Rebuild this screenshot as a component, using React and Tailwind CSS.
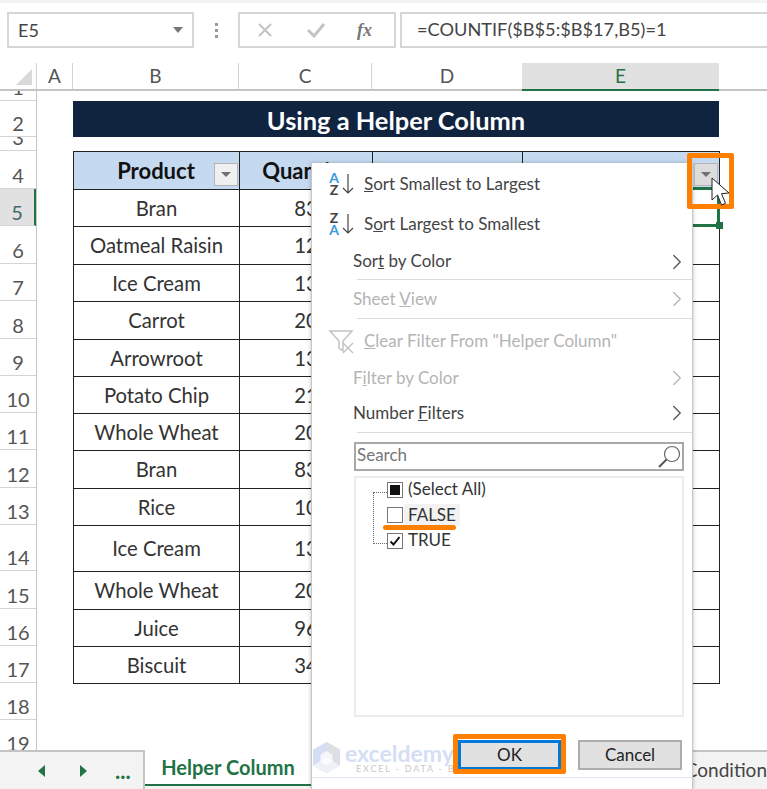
import React from 'react';
import { ChevronRight } from 'lucide-react';

const rows = [
  { n: 5, h: 'h-[37px]', product: 'Bran', qty: '83' },
  { n: 6, h: 'h-[38px]', product: 'Oatmeal Raisin', qty: '12' },
  { n: 7, h: 'h-[37px]', product: 'Ice Cream', qty: '13' },
  { n: 8, h: 'h-[38px]', product: 'Carrot', qty: '20' },
  { n: 9, h: 'h-[37px]', product: 'Arrowroot', qty: '13' },
  { n: 10, h: 'h-[37px]', product: 'Potato Chip', qty: '21' },
  { n: 11, h: 'h-[37px]', product: 'Whole Wheat', qty: '20' },
  { n: 12, h: 'h-[38px]', product: 'Bran', qty: '83' },
  { n: 13, h: 'h-[37px]', product: 'Rice', qty: '10' },
  { n: 14, h: 'h-[46px]', product: 'Ice Cream', qty: '13' },
  { n: 15, h: 'h-[38px]', product: 'Whole Wheat', qty: '20' },
  { n: 16, h: 'h-[37px]', product: 'Juice', qty: '96' },
  { n: 17, h: 'h-[37px]', product: 'Biscuit', qty: '34' },
];

const FilterButton = ({ className }) => (
  <div className={`flex items-center justify-center border border-[#b5b5b5] bg-[#f0f0f0] ${className}`}>
    <div className="h-0 w-0 border-x-[5px] border-t-[5px] border-x-transparent border-t-[#707070]" />
  </div>
);

const RowHead = ({ h, active, children }) => (
  <div className={`flex items-end justify-center overflow-hidden border-b border-[#d4d4d4] pb-[1px] text-[20px] leading-[24px] ${h} ${active ? 'border-r-2 border-r-[#217346] bg-[#e1e1e1] text-[#3f6b6b]' : 'text-[#555]'}`}>
    {children}
  </div>
);

const SortIcon = ({ flip }) => (
  <div className="flex w-[28px] shrink-0 items-center">
    <div className="flex w-[12px] flex-col items-center text-[14px] font-bold leading-[12px]">
      <span className={`h-[12px] ${flip ? 'text-[#444]' : 'text-[#3b9ad9]'}`}>{flip ? 'Z' : 'A'}</span>
      <span className={`h-[12px] ${flip ? 'text-[#3b9ad9]' : 'text-[#444]'}`}>{flip ? 'A' : 'Z'}</span>
    </div>
    <svg width="14" height="22" viewBox="0 0 14 22" className="ml-[1px]">
      <path d="M7 1v19M2 15l5 5 5-5" fill="none" stroke="#444" strokeWidth="1.2" />
    </svg>
  </div>
);

const MenuItem = ({ h, disabled, arrow, icon, children }) => (
  <div className={`flex items-center text-[17px] ${h} ${disabled ? 'text-[#b4b4b4]' : 'text-[#444]'} ${icon ? 'pl-[16px]' : 'pl-[41px]'}`}>
    {icon}
    <span className={icon ? 'ml-[8px]' : ''}>{children}</span>
    {arrow && <ChevronRight className={`absolute left-[352px] ${disabled ? 'text-[#b4b4b4]' : 'text-[#555]'}`} size={26} strokeWidth={1.2} />}
  </div>
);

const Sep = () => <div className="ml-[45px] h-px bg-[#dcdcdc]" />;

const TreeItem = ({ box, label, highlight }) => (
  <div className="flex h-[25.5px] items-center pl-[31px]">
    <div className="flex h-[16px] w-[16px] items-center justify-center border-[1.5px] border-[#777] bg-white">{box}</div>
    <span className={`ml-[1px] flex h-[22px] items-center px-[4px] pb-[2px] text-[17px] text-[#333] ${highlight ? 'bg-[#f2f2f2]' : ''}`}>{label}</span>
  </div>
);

const App = () => {
  return (
    <div className="relative flex h-[789px] w-[767px] flex-col overflow-hidden bg-white font-['Lato',sans-serif] text-[#333]">
      {/* formula bar */}
      <div className="flex h-[63px] items-start border-t-[3px] border-[#f3f3f3] bg-white pt-[9px]">
        <div className="ml-[7px] flex h-[36px] w-[187px] items-center justify-between border-2 border-[#d6d6d6] px-[9px] text-[18px] text-[#444]">
          <span>E5</span>
          <div className="h-0 w-0 border-x-[5px] border-t-[6px] border-x-transparent border-t-[#777]" />
        </div>
        <div className="flex h-[36px] w-[44px] flex-col items-center justify-center gap-[3px]">
          <div className="h-[3px] w-[3px] bg-[#999]" />
          <div className="h-[3px] w-[3px] bg-[#999]" />
          <div className="h-[3px] w-[3px] bg-[#999]" />
        </div>
        <div className="flex h-[36px] w-[158px] items-center border-2 border-[#d6d6d6] pl-[16px] text-[#c4c4c4]">
          <svg width="18" height="18" viewBox="0 0 18 18"><path d="M3 3l12 12M15 3L3 15" stroke="currentColor" strokeWidth="2" /></svg>
          <svg className="ml-[32px]" width="20" height="18" viewBox="0 0 20 18"><path d="M2 9l6 6L18 3" fill="none" stroke="currentColor" strokeWidth="3" /></svg>
          <span className="ml-[31px] font-['Liberation_Serif',serif] text-[18px] font-bold italic text-[#777]">fx</span>
        </div>
        <div className="ml-[4px] flex h-[36px] flex-1 items-center border-y-2 border-l-2 border-[#d6d6d6] pl-[15px] text-[18.2px] text-[#444]">
          =COUNTIF($B$5:$B$17,B5)=1
        </div>
      </div>

      {/* column headers */}
      <div className="flex h-[28px] border-b-2 border-[#c4c4c4] text-[19px] text-[#555]">
        <div className="flex w-[37px] items-end justify-end border-r border-[#d4d4d4] p-[4px]">
          <div className="h-0 w-0 border-b-[16px] border-l-[16px] border-b-[#d9d9d9] border-l-transparent" />
        </div>
        <div className="flex w-[36px] items-center justify-center border-r border-[#d4d4d4]">A</div>
        <div className="flex w-[166px] items-center justify-center border-r border-[#d4d4d4]">B</div>
        <div className="flex w-[133px] items-center justify-center border-r border-[#d4d4d4]">C</div>
        <div className="flex w-[150px] items-center justify-center">D</div>
        <div className="-mb-[2px] flex w-[197px] items-center justify-center border-b-2 border-[#217346] bg-[#e1e1e1] text-[#217346]">E</div>
      </div>

      {/* sheet */}
      <div className="flex min-h-0 flex-1 overflow-hidden">
        <div className="w-[37px] shrink-0 border-r border-[#c4c4c4]">
          <RowHead h="h-[10px]">1</RowHead>
          <RowHead h="h-[36px]">2</RowHead>
          <RowHead h="h-[14px]">3</RowHead>
          <RowHead h="h-[38px]">4</RowHead>
          {rows.map((r) => (
            <RowHead key={r.n} h={r.h} active={r.n === 5}>{r.n}</RowHead>
          ))}
          <RowHead h="h-[37px]">18</RowHead>
          <RowHead h="h-[37px]">19</RowHead>
        </div>
        <div className="relative flex-1 pl-[36px] pt-[10px]">
          <div className="flex h-[36px] w-[646px] items-center justify-center bg-[#10243f] pt-[2px] text-[25.4px] font-bold text-white">
            Using a Helper Column
          </div>
          <div className="mt-[14px] w-[647px] border-l border-t border-[#222]">
            <div className="flex h-[38px] border-b border-[#222] bg-[#c5d9f0] text-[22px] font-bold text-[#111]">
              <div className="relative flex w-[166px] items-center justify-center border-r border-[#222]">
                <span className="pr-[1px]">Product</span>
                <FilterButton className="absolute left-[140px] top-[11px] h-[23px] w-[24px]" />
              </div>
              <div className="flex w-[133px] items-center justify-center border-r border-[#222]">Quantity</div>
              <div className="w-[150px] border-r border-[#222]" />
              <div className="w-[197px] border-r border-[#222]" />
            </div>
            {rows.map((r) => (
              <div key={r.n} className={`flex border-b border-[#222] text-[20.3px] text-[#333] ${r.h}`}>
                <div className="flex w-[166px] items-center justify-center border-r border-[#222]">{r.product}</div>
                <div className="flex w-[133px] items-center justify-center border-r border-[#222]">{r.qty}</div>
                <div className="w-[150px] border-r border-[#222]" />
                <div className="w-[197px] border-r border-[#222]" />
              </div>
            ))}
          </div>
        </div>
      </div>

      {/* sheet tabs */}
      <div className="flex h-[39px] shrink-0 items-stretch bg-[#f3f3f3]">
        <div className="flex w-[145px] items-center border-r-2 border-t-2 border-[#c4c4c4] text-[#217346]">
          <div className="ml-[38px] h-0 w-0 border-y-[6px] border-r-[7px] border-y-transparent border-r-[#217346]" />
          <div className="ml-[35px] h-0 w-0 border-y-[6px] border-l-[7px] border-y-transparent border-l-[#217346]" />
          <span className="ml-[28px] text-[22px] font-bold leading-none">...</span>
        </div>
        <div className="mb-[3px] flex w-[166px] items-center justify-center border-b-2 border-[#217346] bg-white text-[20px] font-bold text-[#217346]">
          Helper Column
        </div>
        <div className="flex flex-1 items-center justify-end overflow-hidden border-t-2 border-[#c4c4c4] text-[19px] text-[#444]">
          <span>Condition</span>
        </div>
      </div>

      {/* selected cell outline */}
      <div className="absolute left-[690px] top-[187px] h-[40px] w-[30px] border-y-[3px] border-r-[3px] border-[#217346]" />
      <div className="absolute left-[716px] top-[222px] h-[7px] w-[7px] bg-[#217346]" />

      {/* filter menu */}
      <div className="absolute left-[311px] top-[163px] h-[626px] w-[382px] border-x border-[#c6c6c6] bg-white shadow-[0_0_4px_rgba(0,0,0,0.25)]">
        <MenuItem h="h-[41px]" icon={<SortIcon />}><u>S</u>ort Smallest to Largest</MenuItem>
        <MenuItem h="h-[40px]" icon={<SortIcon flip />}>S<u>o</u>rt Largest to Smallest</MenuItem>
        <MenuItem h="h-[35px]" arrow><span className="-mt-[2px] block">Sor<u>t</u> by Color</span></MenuItem>
        <Sep />
        <MenuItem h="h-[38px]" disabled arrow>Sheet <u>V</u>iew</MenuItem>
        <Sep />
        <MenuItem h="h-[43px]" disabled icon={
          <svg width="28" height="26" viewBox="0 0 28 26" className="shrink-0">
            <path d="M2 3h22l-9 10v10l-4-3v-7z" fill="none" stroke="#c4c4c4" strokeWidth="1.5" />
            <path d="M15 15l10 10M25 15L15 25" stroke="#c4c4c4" strokeWidth="1.5" />
          </svg>
        }><u>C</u>lear Filter From "Helper Column"</MenuItem>
        <MenuItem h="h-[32px]" disabled arrow>F<u>i</u>lter by Color</MenuItem>
        <MenuItem h="h-[38px]" arrow>Number <u>F</u>ilters</MenuItem>
        <Sep />
        <div className="ml-[42px] mt-[9px] flex h-[29px] w-[330px] items-center justify-between border-2 border-[#a8a8a8] px-[1px] text-[17px] text-[#777]">
          <span className="pb-[3px]">Search</span>
          <svg width="24" height="24" viewBox="0 0 24 24">
            <circle cx="15" cy="9" r="7.5" fill="none" stroke="#666" strokeWidth="1.2" />
            <path d="M9.5 14.5L2 22" stroke="#555" strokeWidth="2" />
          </svg>
        </div>
        <div className="relative ml-[42px] mt-[5px] h-[241px] w-[330px] border-2 border-[#ececec]">
          <div className="absolute left-[17px] top-[14px] h-[52px] w-[14px] border-y border-l border-dotted border-[#666]" />
          <div className="relative -mt-[1px]">
            <TreeItem label="(Select All)" box={<div className="h-[10px] w-[10px] bg-[#111]" />} />
            <TreeItem label="FALSE" highlight />
            <TreeItem label="TRUE" box={
              <svg width="12" height="12" viewBox="0 0 12 12"><path d="M1.5 6.5l3 3 6-7.5" fill="none" stroke="#111" strokeWidth="2" /></svg>
            } />
          </div>
          <div className="absolute left-[27px] top-[47px] h-[5px] w-[73px] rounded-full bg-[#ff8000]" />
        </div>
        <div className="ml-[146px] mt-[23px] flex gap-[17px] text-[17px] text-[#222]">
          <div className="flex h-[30px] w-[103px] items-center justify-center border-[3px] border-[#0078d7] bg-[#e1e1e1]">OK</div>
          <div className="flex h-[30px] w-[104px] items-center justify-center border-2 border-[#adadad] bg-[#e1e1e1]">Cancel</div>
        </div>
        <div className="mt-[7px] h-px bg-[#dfe6f0]" />
      </div>

      {/* watermark */}
      <div className="pointer-events-none absolute left-[312px] top-[742px] flex items-start">
        <svg width="29" height="31" viewBox="0 0 29 31">
          <path d="M14.5 0L28 7.5v16L14.5 31 1 23.5v-16z" fill="#d5def5" />
          <path d="M14.5 0L28 7.5v16l-13.5-8z" fill="#dcdfe3" />
          <path d="M14.5 15.5L28 23.5 14.5 31 1 23.5z" fill="#eef1f5" />
          <path d="M14.5 9l6 3.5v7l-6 3.5-6-3.5v-7z" fill="#fff" fillOpacity="0.75" />
        </svg>
        <div className="ml-[4px] flex flex-col leading-none">
          <span className="h-[22px] text-[23px] font-bold leading-[22px] text-[#d5def5]">exceldemy</span>
          <span className="ml-[11px] text-[9px] tracking-[1.8px] text-[#c8c8c8]">EXCEL - DATA - BI</span>
        </div>
      </div>

      {/* orange highlights */}
      <FilterButton className="absolute left-[694px] top-[163px] h-[23px] w-[24px] !bg-[#dcdcdc]" />
      <div className="absolute left-[687px] top-[153px] h-[56px] w-[47px] rounded-[2px] border-[5px] border-[#ff8000]" />
      <div className="absolute left-[453px] top-[734px] h-[40px] w-[113px] rounded-[2px] border-[5px] border-[#ff8000]" />

      {/* mouse cursor */}
      <svg className="absolute left-[711px] top-[177px]" width="19" height="29" viewBox="0 0 19 29">
        <path d="M1 1v22l5.5-5 4 10 4-1.7-4-9.6 7.5-.7z" fill="#fff" stroke="#222" strokeWidth="1" />
      </svg>
    </div>
  );
};

export default App;
